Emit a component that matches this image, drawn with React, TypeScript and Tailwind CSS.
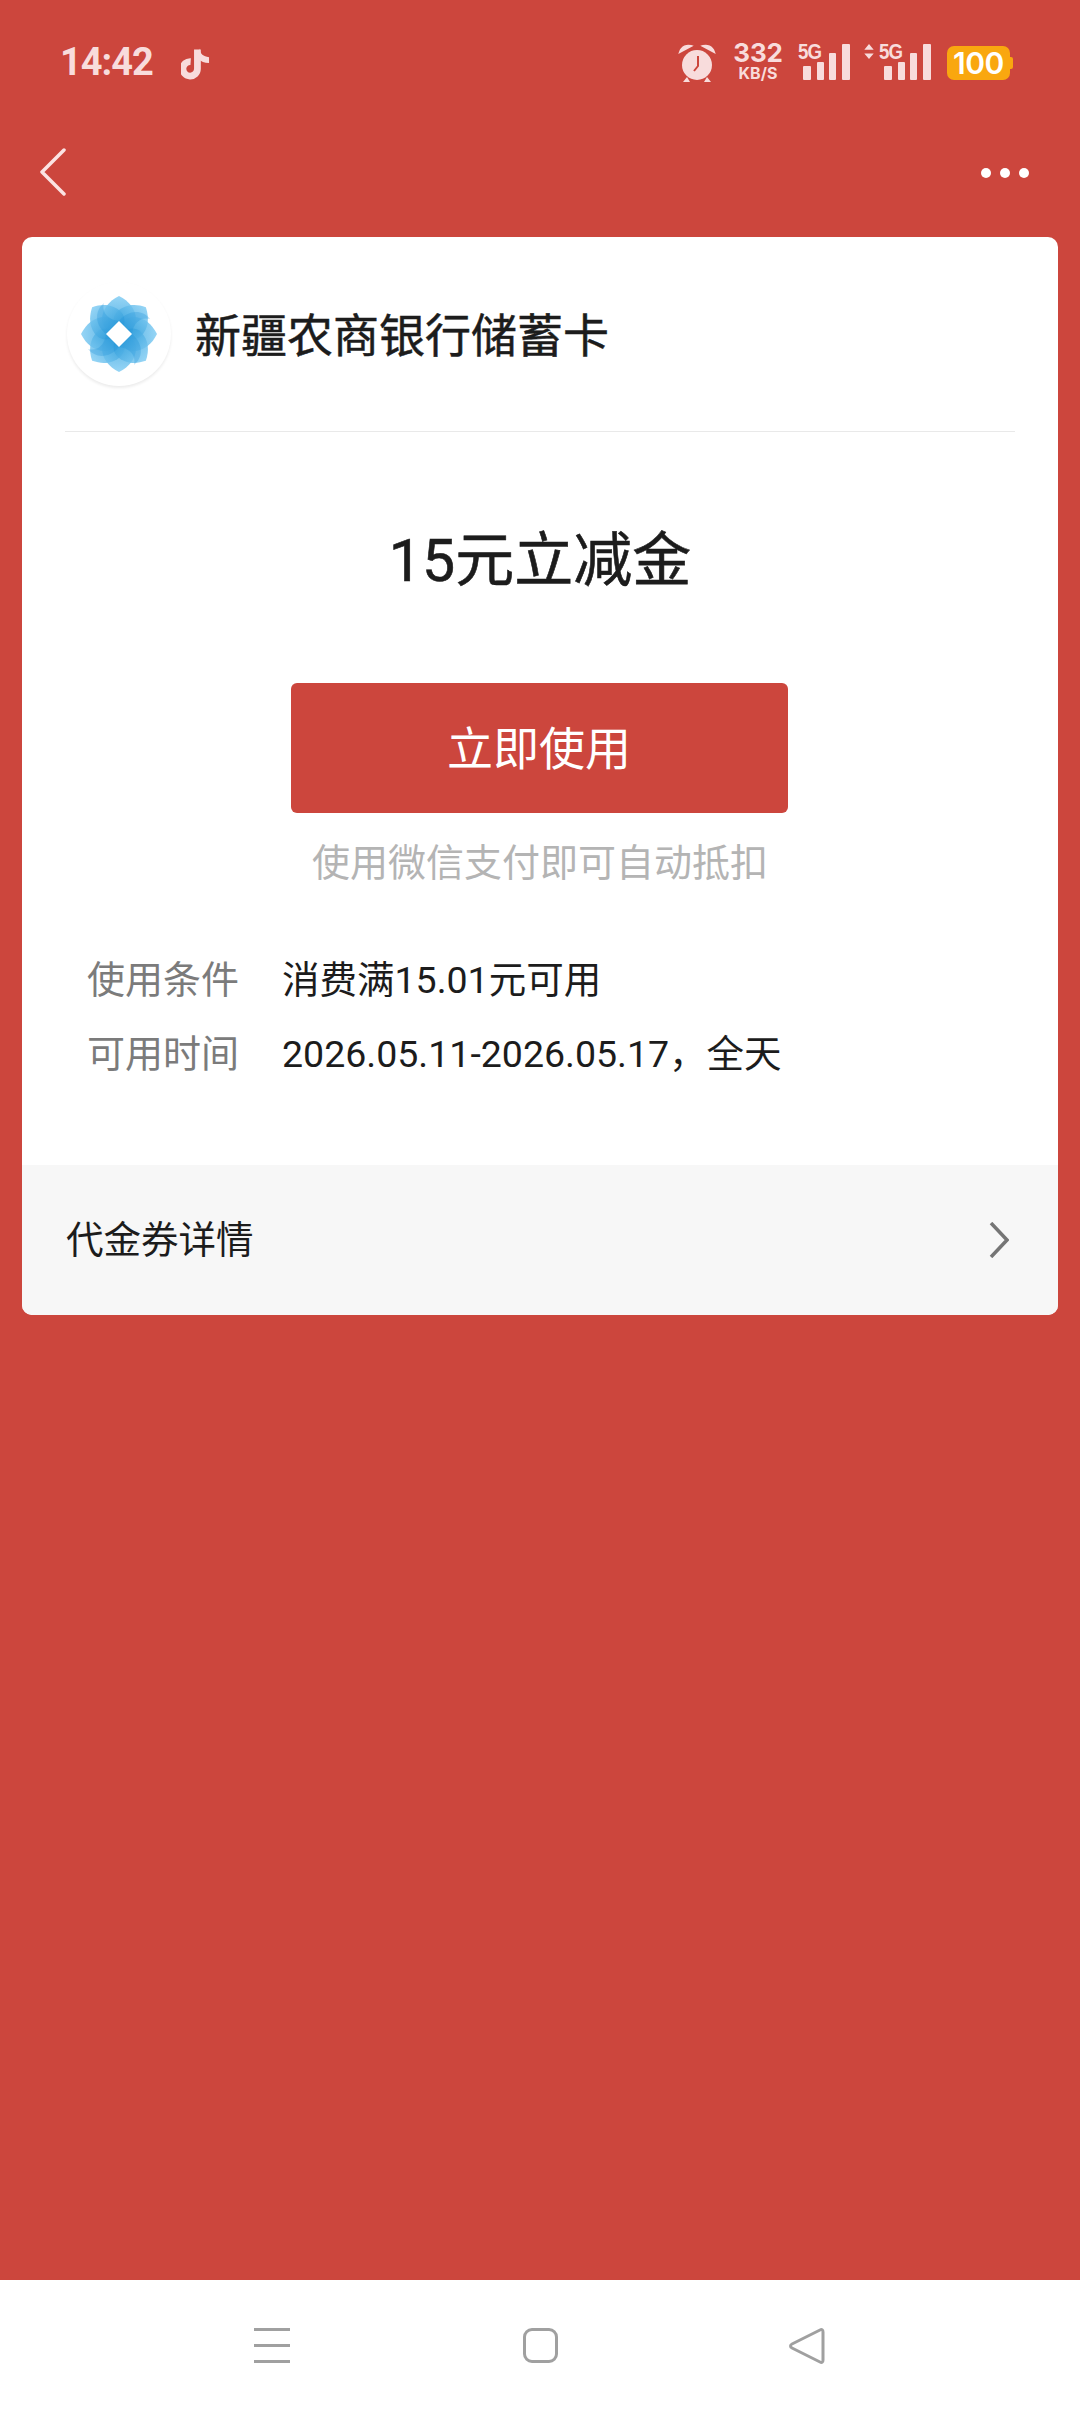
const cjk = "font-['Roboto','Noto_Sans_CJK_SC',sans-serif]";

function Bars() {
  return (
    <svg width="47" height="36" viewBox="0 0 47 36" className="block">
      <g fill="#f8dcdc">
        <rect x="0" y="22" width="8" height="14" rx="1" />
        <rect x="14" y="18" width="7" height="18" rx="1" />
        <rect x="26" y="9" width="7" height="27" rx="1" />
        <rect x="39" y="0" width="8" height="36" rx="1" />
      </g>
    </svg>
  );
}

function Logo() {
  const petal = "M0 -38 C10 -33 17 -25 17 -14 C17 -6 8 0 0 0 C-8 0 -17 -6 -17 -14 C-17 -25 -10 -33 0 -38Z";
  const swirl = "M0 -13 C10 -25 24 -24 31 -15 C24 -17 15 -14 13 0 Z";
  const angles = [0, 180, 90, 270, 45, 225, 135, 315];
  return (
    <div className="w-[104px] h-[104px] mt-[1px] rounded-full bg-white shadow-[0_2px_3px_rgba(0,0,0,0.08)] flex items-center justify-center shrink-0">
      <svg width="80" height="80" viewBox="-40 -40 80 80">
        <defs>
          <linearGradient id="p" x1="0" y1="0" x2="0" y2="1">
            <stop offset="0" stopColor="#84cef4" />
            <stop offset="1" stopColor="#2a9ad9" />
          </linearGradient>
        </defs>
        <g fill="url(#p)" fillOpacity="0.85">
          {angles.map((a) => (
            <path key={a} d={petal} transform={`rotate(${a})`} />
          ))}
        </g>
        <g fill="#1b8fd6" fillOpacity="0.28">
          <path d={swirl} />
          <path d={swirl} transform="rotate(90)" />
          <path d={swirl} transform="rotate(180)" />
          <path d={swirl} transform="rotate(270)" />
        </g>
        <path d="M0 -13 L13 0 L0 13 L-13 0Z" fill="#fff" />
      </svg>
    </div>
  );
}

export default function App() {
  return (
    <div className={`w-[1080px] h-[2412px] bg-[#cc463d] flex flex-col ${cjk}`}>
      <div className="h-[124px] pl-[60px] pr-[67px] pt-[42px] flex items-start justify-between text-[#f8dcdc]">
        <div className="flex items-start">
          <span className="text-[38px] font-bold leading-[40px] tracking-[-1px] w-[93px]">14:42</span>
          <svg width="29" height="34" viewBox="0 0 30 34" className="ml-[28px] mt-[4px]" fill="none">
            <path d="M17 3 V23 A7.500 7.500 0 1 1 10 15.500" stroke="#f8dcdc" strokeWidth="7" />
            <path d="M19 2 C20 8 23 10 29 11 V17 C24 17 21 15 18 13Z" fill="#f8dcdc" />
          </svg>
        </div>
        <div className="flex items-start">
          <svg width="38" height="40" viewBox="0 0 38 40" className="mt-[1px] mr-[18px]">
            <circle cx="19" cy="22" r="15" fill="#f8dcdc" />
            <path d="M2 9 C4 3 9 2 13 3 Z M36 9 C34 3 29 2 25 3Z" fill="#f8dcdc" stroke="#f8dcdc" strokeWidth="2" />
            <path d="M9 34 L5 39 H12Z M29 34 L33 39 H26Z" fill="#f8dcdc" />
            <path d="M20 13 V23 L16 28" stroke="#cc463d" strokeWidth="2" fill="none" />
          </svg>
          <div className="flex flex-col items-center w-[48px] mr-[16px] font-['Inter',sans-serif] font-bold">
            <span className="text-[26px] leading-[22px] tracking-[-0.2px]">332</span>
            <span className="text-[16px] leading-[15px] mt-[2px]">KB/S</span>
          </div>
          <div className="relative w-[52px] h-[37px] mt-[2px] mr-[14px]">
            <span className="absolute left-0 top-[-3px] origin-left scale-x-[0.85] text-[22px] leading-[22px] font-bold font-['Liberation_Sans',sans-serif] tracking-[-1px]">5G</span>
            <div className="absolute left-[5px] top-0"><Bars /></div>
          </div>
          <div className="relative w-[66px] h-[37px] mt-[2px] mr-[17px]">
            <svg width="10" height="15" viewBox="0 0 10 16" className="absolute left-0 top-0">
              <path d="M5 0 L10 6 H0Z M5 16 L10 10 H0Z" fill="#f8dcdc" />
            </svg>
            <span className="absolute left-[15px] top-[-3px] origin-left scale-x-[0.85] text-[22px] leading-[22px] font-bold font-['Liberation_Sans',sans-serif] tracking-[-1px]">5G</span>
            <div className="absolute left-[20px] top-0"><Bars /></div>
          </div>
          <div className="flex items-center mt-[4px]">
            <div className="w-[63px] h-[34px] rounded-[7px] bg-[#f9a70f] text-white flex items-center justify-center font-['Inter',sans-serif] font-semibold text-[30px] leading-none tracking-[-0.5px]">100</div>
            <div className="w-[3px] h-[12px] rounded-r-[2px] bg-[#f9a70f]" />
          </div>
        </div>
      </div>

      <div className="h-[113px] pl-[40px] pr-[51px] flex items-start justify-between">
        <svg width="26" height="48" viewBox="0 0 26 48" className="mt-[24px]" fill="none">
          <path d="M24 2 L2 24 L24 46" stroke="#fbe3e3" strokeWidth="3.500" strokeLinecap="round" strokeLinejoin="round" />
        </svg>
        <div className="flex gap-[9px] mt-[44px]">
          <div className="w-[10px] h-[10px] rounded-full bg-white" />
          <div className="w-[10px] h-[10px] rounded-full bg-white" />
          <div className="w-[10px] h-[10px] rounded-full bg-white" />
        </div>
      </div>

      <div className="mx-[22px] w-[1036px] h-[1078px] rounded-[10px] bg-white overflow-hidden flex flex-col">
        <div className="mx-[43px] h-[195px] pt-[44px] border-b border-[#e9e9e9] flex items-start">
          <div className="ml-[2px]"><Logo /></div>
          <span className="ml-[24px] mt-[27px] text-[46px] leading-[56px] text-[#1c1c1c] [-webkit-text-stroke:0.5px_#1c1c1c]">新疆农商银行储蓄卡</span>
        </div>

        <div className="flex-1 flex flex-col items-center">
          <div className="mt-[94px] text-[59px] leading-[70px] text-[#1c1c1c] [-webkit-text-stroke:0.6px_#1c1c1c]">15元立减金</div>
          <div className="mt-[87px] -ml-[2px] w-[497px] h-[130px] pt-[3px] rounded-[6px] bg-[#cc463d] text-white text-[46px] flex items-center justify-center">立即使用</div>
          <div className="mt-[25px] text-[38px] leading-[50px] text-[#b4b4b4]">使用微信支付即可自动抵扣</div>
          <div className="self-start ml-[65px] mt-[67px] flex flex-col gap-[24px] text-[38px] leading-[50px]">
            <div className="flex">
              <span className="w-[195px] text-[#7b7b7b]">使用条件</span>
              <span className="text-[37.500px] text-[#1c1c1c]">消费满15.01元可用</span>
            </div>
            <div className="flex">
              <span className="w-[195px] text-[#7b7b7b]">可用时间</span>
              <span className="text-[37.500px] text-[#1c1c1c]">2026.05.11-2026.05.17，全天</span>
            </div>
          </div>
        </div>

        <div className="h-[150px] bg-[#f7f7f7] pl-[44px] pr-[49px] flex items-center justify-between">
          <span className="text-[37.500px] text-[#1c1c1c]">代金券详情</span>
          <svg width="20" height="36" viewBox="0 0 20 36" fill="none">
            <path d="M2 1 L18 18 L2 35" stroke="#757575" strokeWidth="3.500" />
          </svg>
        </div>
      </div>

      <div className="flex-1" />

      <div className="h-[132px] bg-white relative flex items-start pt-[48px]">
        <div className="ml-[254px] w-[36px] h-[35px] flex flex-col justify-between py-0">
          <div className="h-[3px] bg-[#a0a0a0]" />
          <div className="h-[3px] bg-[#a0a0a0]" />
          <div className="h-[3px] bg-[#a0a0a0]" />
        </div>
        <div className="ml-[233px] w-[35px] h-[35px] rounded-[9px] border-[3px] border-[#a0a0a0]" />
        <svg width="36" height="36" viewBox="0 0 36 36" className="ml-[231px]" fill="none">
          <path d="M31 2 C33 1 34 2 34 4 V32 C34 34 33 35 31 34 L3 20 C1 19 1 17 3 16Z" stroke="#a0a0a0" strokeWidth="3" strokeLinejoin="round" />
        </svg>
      </div>
    </div>
  );
}
